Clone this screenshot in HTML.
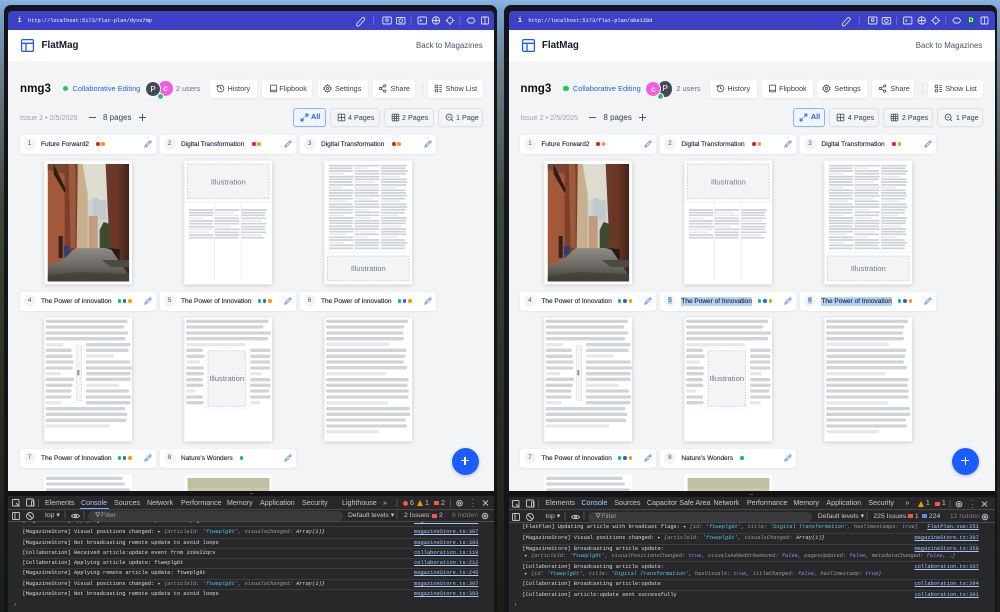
<!DOCTYPE html>
<html><head><meta charset="utf-8"><title>FlatMag</title>
<style>
html,body{margin:0;padding:0}
body{width:1000px;height:612px;overflow:hidden;position:relative;font-family:"Liberation Sans",sans-serif;background:linear-gradient(#8db5e2 0,#7aa3d2 10px,#6d7f8c 70px,#3a4a3a 200px,#2a2e22 400px,#1b1d18 612px)}
.w{position:absolute;top:0;width:500px;height:612px;filter:blur(.3px)}
.fr{position:absolute;left:3.5px;top:5px;width:493px;height:607px;background:#14141b;border-radius:7px 7px 0 0}
.tb{position:absolute;left:8.4px;top:10.5px;width:485.8px;height:19.5px;background:#3c41c7;border-radius:4px 4px 0 0}
.hd{position:absolute;left:8.4px;top:30px;width:485.8px;height:31px;background:#fff}
.ct{position:absolute;left:8.4px;top:61px;width:485.8px;height:430.2px;background:#f3f4f6;overflow:hidden}
.ci{position:absolute;left:-8.4px;top:-61px;width:500px;height:612px}
.t{position:absolute;white-space:nowrap;line-height:10px}
.b{position:absolute;background:#fff;border-radius:2.5px;height:18px;top:79.5px;box-shadow:0 .5px 1.5px rgba(0,0,0,.09);box-sizing:border-box;color:#374151;font-size:7.3px;line-height:18px;white-space:nowrap}
.b span{position:absolute;top:0}
.b svg{position:absolute;top:4.5px;width:9px;height:9px}
.v{position:absolute;top:108px;height:18.5px;background:#f3f4f6;border:.7px solid #dfe1e5;border-radius:3px;box-sizing:border-box;font-size:7.2px;color:#374151;line-height:17px;white-space:nowrap;box-shadow:0 .5px 1px rgba(0,0,0,.06)}
.v span{position:absolute;top:0}
.v svg{position:absolute;top:4px;width:9px;height:9px}
.c{position:absolute;width:136px;height:19px;background:#fff;border-radius:3px;box-shadow:0 .5px 2px rgba(0,0,0,.1)}
.c b{position:absolute;left:3.6px;top:3.5px;width:12px;height:12px;border-radius:50%;background:#f3f4f6;font-weight:400;font-size:6.5px;line-height:12px;text-align:center;color:#4b5563}
.c b u{text-decoration:none;background:#b5d3f8;padding:0 .6px}
.c span{position:absolute;left:21px;top:0;line-height:19px;font-size:6.5px;font-weight:400;-webkit-text-stroke:.14px #1f2937;color:#1f2937;white-space:nowrap}
.c span.sel{background:#b5d3f8;line-height:9px;top:5px}
.c i{position:absolute;top:7.7px;width:3.6px;height:3.6px;border-radius:50%}
.c svg{position:absolute;left:123.5px;top:5.5px;width:8px;height:8px}
.r{background:#ef1a2d}.o{background:#f59e0b}.g{background:#10b981}.u{background:#2563eb}
.th{position:absolute;width:120px;height:135px}
.sh{filter:drop-shadow(0 1.5px 2.5px rgba(0,0,0,.17))}
.dv{position:absolute;left:8.4px;top:491.2px;width:485.8px;height:121px;background:#28282a}
.dk{position:absolute;left:8.4px;top:491.2px;width:485.8px;height:4.8px;background:#131316}
.tab{position:absolute;top:498px;font-size:7.1px;line-height:10px;color:#c4c7c5;white-space:nowrap}
.l{position:absolute;font-family:"Liberation Mono",monospace;font-size:5.37px;line-height:8px;color:#dcdcdc;white-space:nowrap}
.l em{font-style:italic;color:#9a9a9a}.l .s{color:#4ec3e0;font-style:italic}.l .k{color:#9d87ee;font-style:italic}.l .w2{color:#dcdcdc;font-style:italic}
.a{position:absolute;font-family:"Liberation Mono",monospace;font-size:5.37px;line-height:8px;color:#a8c7fa;text-decoration:underline;white-space:nowrap;text-align:right;right:21.6px}
.ln{position:absolute;height:.6px;background:#3d3d40}
.ic{position:absolute;overflow:visible}
</style></head><body>

<svg width="0" height="0" style="position:absolute">
<defs>
<linearGradient id="grd" x1="0" y1="0" x2="0" y2="1"><stop offset="0" stop-color="#8d8b83"/><stop offset=".5" stop-color="#6e6c65"/><stop offset="1" stop-color="#3f3e3a"/></linearGradient>
<linearGradient id="rw" x1="0" y1="0" x2="1" y2="0"><stop offset="0" stop-color="#6b3a2a"/><stop offset=".5" stop-color="#6a3626"/><stop offset="1" stop-color="#3f2419"/></linearGradient>
<g id="hist" fill="none" stroke="#374151" stroke-width="2" stroke-linecap="round" stroke-linejoin="round"><path d="M3 12a9 9 0 1 0 3-6.7L3 8"/><path d="M3 3v5h5"/><path d="M12 7v5l4 2"/></g>
<g id="book" fill="none" stroke="#374151" stroke-width="2" stroke-linecap="round" stroke-linejoin="round"><path d="M4 19.5V5a2 2 0 0 1 2-2h14v18H6.5a2.5 2.5 0 0 1-2.500-2.500z"/><path d="M4 19a2.500 2.500 0 0 1 2.500-2.500H20"/></g>
<g id="gear" fill="none" stroke="#374151" stroke-width="2" stroke-linejoin="round"><circle cx="12" cy="12" r="3"/><path d="M12 2l2 3 3.500-.5 1 3.500L22 10l-1.500 2 1.500 2-3.500 2-1 3.500-3.500-.5-2 3-2-3-3.500.5-1-3.500L2 14l1.500-2L2 10l3.500-2 1-3.500 3.500.5z"/></g>
<g id="share" fill="none" stroke="#374151" stroke-width="2"><circle cx="18" cy="5" r="3"/><circle cx="6" cy="12" r="3"/><circle cx="18" cy="19" r="3"/><path d="M8.600 10.500l6.800-4M8.600 13.500l6.800 4"/></g>
<g id="list" fill="none" stroke="#374151" stroke-width="2"><rect x="3" y="3" width="7" height="7" rx="1"/><rect x="3" y="14" width="7" height="7" rx="1"/><path d="M14 4h7M14 9h7M14 15h7M14 20h7"/></g>
<g id="exp" fill="none" stroke="#2563eb" stroke-width="2.400" stroke-linecap="round" stroke-linejoin="round"><path d="M15 3h6v6M21 3l-7 7M9 21H3v-6M3 21l7-7"/></g>
<g id="g2" fill="none" stroke="#374151" stroke-width="2"><rect x="3" y="3" width="18" height="18" rx="2"/><path d="M12 3v18M3 12h18"/></g>
<g id="g3" fill="none" stroke="#374151" stroke-width="2"><rect x="3" y="3" width="18" height="18" rx="2"/><path d="M9 3v18M15 3v18M3 9h18M3 15h18"/></g>
<g id="zm" fill="none" stroke="#374151" stroke-width="2" stroke-linecap="round"><circle cx="11" cy="11" r="8"/><path d="M21 21l-4.300-4.300M8 11h6"/></g>
<g id="pen" fill="none" stroke="#3b76f0" stroke-width="1.800" stroke-linecap="round" stroke-linejoin="round"><path d="M17 3a2.800 2.800 0 1 1 4 4L7.500 20.500 2 22l1.500-5.500z"/><path d="M15 5l4 4M5 15l4 4"/></g>

<g id="photo">
<rect width="81.500" height="117.500" fill="#dcdcd0"/>
<path d="M40 36h20v48H40z" fill="#cfd2d2"/>
<path d="M41 52h9v32h-9z" fill="#c29a7c"/><path d="M45 34h6v18h-6zM51 36h7v20h-7z" fill="#c3c8cc"/>
<path d="M29 0h6l5 30v54H29z" fill="#c8b08e"/>
<path d="M15 0h15v8l-1 76-3 6H15z" fill="#7d3e2a"/>
<path d="M21 0h6l1 10v74h-5z" fill="#9a5a3c"/>
<path d="M0 0h17v96L0 102z" fill="#a4583a"/>
<path d="M0 0h17v10L0 6z" fill="#7a4632"/>
<path d="M6 0l12 25-1 4L6 10z" fill="#2c1d18"/>
<path d="M11 72h4v22h-4z" fill="#33231c"/>
<path d="M58 0h23.500v112L62 86z" fill="url(#rw)"/>
<path d="M52 66l4-8 6 2v24H52z" fill="#3f4a2e"/>
<path d="M16 82h6v15h-5z" fill="#2d3f70"/>
<path d="M57 84h10v14H57z" fill="#2b2d28"/>
<path d="M64 85h8v20l-8-5z" fill="#231d19"/>
<path d="M0 102l16-7 12-11 30 0 6 2 17.500 26v5.500H0z" fill="url(#grd)"/>
<path d="M54 96h27.500v7H63z" fill="#4b4a44"/>
<path d="M0 112l30-4 51.500 2v7.500H0z" fill="#3e3d38" opacity=".7"/>
</g>

<g id="p1"><rect x="43" y="17" width="263" height="371" fill="#fff"/><svg x="53" y="27" width="244.500" height="352.500" viewBox="0 0 81.500 117.500" preserveAspectRatio="none"><use href="#photo"/></svg></g>

<g id="p2"><rect x="43" y="17" width="263" height="371" fill="#fff"/>
<rect x="52" y="27" width="245" height="104" fill="#f3f4f6" stroke="#c6c9ce" stroke-width="2.500" stroke-dasharray="5 4"/>
<rect x="43" y="139" width="263" height="3" fill="#eeeff1"/>
<path d="M133.500 143V375M213.500 143V375" stroke="#eceef0" stroke-width="3"/>
<path d="M57 165h72M57 173h74M57 181h72M57 198h73M57 206h71M57 215h75M57 240h72M57 248h75M135 165h73M135 190h71M135 198h73M135 206h72M135 223h74M135 232h72M135 240h72M135 248h70M214 165h76M214 173h72M214 181h70M214 190h74M214 206h76M214 215h72M214 223h70M214 232h76M214 248h70" stroke="#cdd1d7" stroke-width="5" fill="none"/>
<path d="M57 190h44M57 232h60M57 223h72M135 173h58M135 181h72M135 215h48M214 198h62M214 240h62" stroke="#e5e7eb" stroke-width="5" fill="none"/>
<text x="175" y="88" text-anchor="middle" font-family="Liberation Sans" font-size="23" fill="#727985">Illustration</text></g>

<g id="p3"><rect x="43" y="17" width="263" height="371" fill="#fff"/>
<path d="M133.500 27V290M213.500 27V290" stroke="#f0f1f3" stroke-width="3"/>
<path d="M57 32h74M57 40h70M57 48h72M57 65h74M57 73h72M57 81h70M57 90h73M57 106h72M57 114h74M57 122h70M57 131h72M57 148h70M57 156h75M57 164h72M57 173h70M57 189h73M57 197h72M57 205h74M57 214h70M57 222h76M57 230h72M57 247h72M57 255h74M57 271h74M57 280h72
M135 32h74M135 48h72M135 56h73M135 65h74M135 73h72M135 90h71M135 106h73M135 114h70M135 122h74M135 139h70M135 148h73M135 156h74M135 172h74M135 181h72M135 197h73M135 205h74M135 214h72M135 222h74M135 238h72M135 255h72M135 263h74M135 271h70M135 280h74
M214 32h76M214 40h72M214 48h79M214 56h74M214 73h76M214 81h78M214 90h74M214 106h72M214 114h74M214 122h76M214 131h72M214 148h76M214 156h78M214 164h72M214 173h70M214 189h76M214 197h74M214 205h72M214 222h74M214 230h72M214 238h76M214 255h70M214 263h78M214 271h72M214 280h70" stroke="#cbcfd6" stroke-width="5" fill="none"/>
<path d="M57 56h44M57 98h42M57 139h58M57 181h44M57 238h52M57 263h46M135 40h42M135 81h58M135 98h74M135 131h54M135 164h42M135 189h50M135 230h60M135 247h40M214 65h56M214 98h46M214 139h58M214 181h50M214 214h60M214 247h48" stroke="#e5e7eb" stroke-width="5" fill="none"/>
<rect x="43" y="292" width="263" height="2" fill="#f1f2f4"/>
<rect x="52" y="303" width="245" height="74" fill="#f3f4f6" stroke="#c6c9ce" stroke-width="2.500" stroke-dasharray="5 4"/>
<text x="175" y="348" text-anchor="middle" font-family="Liberation Sans" font-size="23" fill="#727985">Illustration</text></g>

<g id="p4"><rect x="43" y="17" width="263" height="371" fill="#fff"/>
<path d="M52 28H288M52 45H278M52 63H290M52 80H281M52 115H120M52 133H123M52 150H126M52 168H124M52 202H128M52 220H123M52 237H120M52 255H120M172 98H297M172 115H291M172 150H297M172 168H303M172 185H297M172 202H297M172 237H292M172 255H299M172 272H297M52 290H282M52 307H287M52 325H284" stroke="#d0d3d9" stroke-width="10" stroke-linecap="round" fill="none"/>
<path d="M52 98H95M52 185H87M52 272H91M172 132H247M172 220H263M52 342H234" stroke="#e5e7eb" stroke-width="10" stroke-linecap="round" fill="none"/>
<rect x="132" y="92" width="31" height="180" rx="3" fill="#fff" stroke="#eef0f2"/>
<rect x="140" y="100" width="15" height="166" rx="3" fill="#f3f4f6" stroke="#c6c9ce" stroke-width="2" stroke-dasharray="4 3"/>
<rect x="142" y="174" width="6" height="16" fill="#8b9099"/></g>

<g id="p5"><rect x="43" y="17" width="263" height="371" fill="#fff"/>
<path d="M53 28H290M53 45H275M53 63H298M53 80H290M53 115H94M53 133H99M53 168H97M53 185H97M53 203H94M53 220H95M53 255H94M53 272H96M245 115H297M245 133H296M245 150H296M245 168H296M245 203H296M245 220H296M245 237H293M245 255H297" stroke="#d0d3d9" stroke-width="10" stroke-linecap="round" fill="none"/>
<path d="M53 98H221M53 150H86M53 237H73M245 185H271M245 272H267" stroke="#e5e7eb" stroke-width="10" stroke-linecap="round" fill="none"/>
<rect x="105" y="108" width="130" height="183" rx="3" fill="#fff" stroke="#e9ebee"/>
<rect x="114" y="116" width="112" height="167" fill="#f3f4f6" stroke="#c6c9ce" stroke-width="2.500" stroke-dasharray="5 4"/>
<text x="170" y="207" text-anchor="middle" font-family="Liberation Sans" font-size="23" fill="#727985">Illustration</text></g>

<g id="p6"><rect x="43" y="17" width="263" height="371" fill="#fff"/>
<path d="M53 28H289M53 45H278M53 63H275M53 80H277M53 115H284M53 133H281M53 150H277M53 167H287M53 203H291M53 220H288M53 237H291M53 255H291M53 290H295M53 307H296M53 324H283M53 342H286" stroke="#d0d3d9" stroke-width="10" stroke-linecap="round" fill="none"/>
<path d="M53 97H233M53 185H223M53 273H229M53 359H203" stroke="#e5e7eb" stroke-width="10" stroke-linecap="round" fill="none"/></g>

<g id="p7"><rect x="43" y="17" width="263" height="371" fill="#fff"/>
<path d="M53 28H273M53 45H280M53 63H295M53 80H280" stroke="#d0d3d9" stroke-width="10" stroke-linecap="round" fill="none"/></g>

<g id="p8"><rect x="43" y="17" width="263" height="371" fill="#fff"/><rect x="53" y="27" width="245" height="200" fill="#c9c8a6"/><rect x="53" y="27" width="245" height="30" fill="#bfc0a0"/></g>
</defs>
</svg>

<!-- ============ LEFT WINDOW ============ -->
<div class="w" style="left:0">
<div class="fr"></div>
<div class="tb"></div>
<div class="t" style="left:17.500px;top:15.500px;font:bold 7px/10px 'Liberation Mono',monospace;color:#fff">i</div>
<div class="t" style="left:28px;top:15.500px;font:5.300px/10px 'Liberation Mono',monospace;color:#fff">http://localhost:5173/flat-plan/dyvx7mp</div>
<svg class="ic" style="left:0;top:0" width="500" height="35" fill="none" stroke="#dfe1fa" stroke-width=".9">
<path d="M357 23.500l5-5.500a1.500 1.500 0 0 1 2.300 2.200l-5 5.300a1.500 1.500 0 0 1-2.300-2z"/>
<path d="M373.600 16v9" stroke="#6b6fd8"/>
<rect x="382.800" y="17" width="8.500" height="7" rx="1"/><circle cx="387" cy="20" r="1.300"/>
<rect x="396.500" y="17.500" width="8.500" height="6.500" rx="1"/><circle cx="400.700" cy="20.700" r="1.800"/>
<path d="M411 16v9" stroke="#6b6fd8"/>
<rect x="418" y="17" width="8.500" height="7" rx="1"/><path d="M420 19.500l1.500 1-1.500 1"/>
<circle cx="436" cy="20.500" r="3.700"/><path d="M432.300 20.500h7.400M436 16.800v7.400"/>
<circle cx="450" cy="20.500" r="2.800"/><path d="M450 16v2M450 23v2M445.500 20.500h2M452.500 20.500h2"/>
<path d="M460 16v9" stroke="#6b6fd8"/>
<path d="M467 20.500l2-2.500h4l2 2.500-2 2.500h-4z"/>
<rect x="481.500" y="17" width="7" height="7" rx="1"/><path d="M485 17v7"/>
</svg>
<div class="hd"></div>
<svg class="ic" style="left:21px;top:39px" width="13" height="13" viewBox="0 0 13 13" fill="none" stroke="#1a5cf5" stroke-width="1.300"><rect x=".6" y=".6" width="11.800" height="11.800" rx="1.200"/><path d="M.6 4.300h11.800M5 4.300v8"/></svg>
<div class="t" style="left:41.500px;top:41px;font-size:9.800px;font-weight:700;color:#111827">FlatMag</div>
<div class="t" style="left:416px;top:41px;font-size:7.900px;color:#4b5563">Back to Magazines</div>
<div class="ct"><div class="ci">
<div class="t" style="left:20px;top:84px;font-size:11.600px;font-weight:700;color:#111">nmg3</div>
<div style="position:absolute;left:62.700px;top:85.700px;width:5.600px;height:5.600px;border-radius:50%;background:#22c55e"></div>
<div class="t" style="left:72.500px;top:84px;font-size:7.400px;color:#2563eb">Collaborative Editing</div>
<div style="position:absolute;left:158px;top:81px;width:15px;height:15px;border-radius:50%;background:#f45ce8;color:#fff;font-size:8px;line-height:15px;text-align:center;font-weight:700">c</div>
<div style="position:absolute;left:145px;top:80.500px;width:16px;height:16px;border-radius:50%;background:#444b57;border:.7px solid #fff;box-sizing:border-box;color:#fff;font-size:8px;line-height:15px;text-align:center">P</div>
<div style="position:absolute;left:157.500px;top:93.500px;width:5px;height:5px;border-radius:50%;background:#22c55e;outline:.6px solid #fff"></div>
<div class="t" style="left:176px;top:84px;font-size:7.400px;color:#6b7280">2 users</div>

<div class="b" style="left:210px;width:47px"><svg viewBox="0 0 24 24" style="left:6px"><use href="#hist"/></svg><span style="left:17.500px">History</span></div>
<div class="b" style="left:262px;width:50px"><svg viewBox="0 0 24 24" style="left:6.500px"><use href="#book"/></svg><span style="left:17.300px">Flipbook</span></div>
<div class="b" style="left:317.500px;width:50.500px"><svg viewBox="0 0 24 24" style="left:5.500px"><use href="#gear"/></svg><span style="left:17.500px">Settings</span></div>
<div class="b" style="left:372.500px;width:42px"><svg viewBox="0 0 24 24" style="left:5.500px"><use href="#share"/></svg><span style="left:18px">Share</span></div>
<div style="position:absolute;left:422.300px;top:83px;width:1px;height:11px;background:#dfe1e5"></div>
<div class="b" style="left:428px;width:54.500px"><svg viewBox="0 0 24 24" style="left:6px"><use href="#list"/></svg><span style="left:17.500px">Show List</span></div>

<div class="t" style="left:20px;top:112.500px;font-size:7.200px;color:#9ca3af">Issue 2 • 2/5/2025</div>
<div style="position:absolute;left:89px;top:117px;width:7px;height:.9px;background:#4b5563"></div>
<div class="t" style="left:103px;top:112.500px;font-size:8px;color:#374151">8 pages</div>
<div style="position:absolute;left:139px;top:117px;width:7px;height:.9px;background:#4b5563"></div>
<div style="position:absolute;left:142.100px;top:114px;width:.9px;height:7px;background:#4b5563"></div>

<div class="v" style="left:293px;width:32.500px;background:#eff4fe;border:1px solid #8fb2f7;color:#2563eb;font-weight:700;line-height:16.500px"><svg viewBox="0 0 24 24" style="left:5.500px;top:3.800px"><use href="#exp"/></svg><span style="left:17px">All</span></div>
<div class="v" style="left:329.500px;width:50px"><svg viewBox="0 0 24 24" style="left:6px"><use href="#g2"/></svg><span style="left:17.500px">4 Pages</span></div>
<div class="v" style="left:383.500px;width:50px"><svg viewBox="0 0 24 24" style="left:6px"><use href="#g3"/></svg><span style="left:17.500px">2 Pages</span></div>
<div class="v" style="left:437.500px;width:45px"><svg viewBox="0 0 24 24" style="left:6px"><use href="#zm"/></svg><span style="left:17.500px">1 Page</span></div>

<div class="c" style="left:20px;top:134.500px"><b>1</b><span>Future Forward2</span><i class="r" style="left:76px"></i><i class="o" style="left:81.300px"></i><svg viewBox="0 0 24 24"><use href="#pen"/></svg></div>
<div class="c" style="left:160px;top:134.500px"><b>2</b><span>Digital Transformation</span><i class="r" style="left:92px"></i><i class="o" style="left:97.300px"></i><svg viewBox="0 0 24 24"><use href="#pen"/></svg></div>
<div class="c" style="left:300px;top:134.500px"><b>3</b><span>Digital Transformation</span><i class="r" style="left:92px"></i><i class="o" style="left:97.300px"></i><svg viewBox="0 0 24 24"><use href="#pen"/></svg></div>
<div class="c" style="left:20px;top:291.700px"><b>4</b><span>The Power of Innovation</span><i class="g" style="left:97.500px"></i><i class="u" style="left:102.900px"></i><i class="o" style="left:108.200px"></i><svg viewBox="0 0 24 24"><use href="#pen"/></svg></div>
<div class="c" style="left:160px;top:291.700px"><b>5</b><span>The Power of Innovation</span><i class="g" style="left:97.500px"></i><i class="u" style="left:102.900px"></i><i class="o" style="left:108.200px"></i><svg viewBox="0 0 24 24"><use href="#pen"/></svg></div>
<div class="c" style="left:300px;top:291.700px"><b>6</b><span>The Power of Innovation</span><i class="g" style="left:97.500px"></i><i class="u" style="left:102.900px"></i><i class="o" style="left:108.200px"></i><svg viewBox="0 0 24 24"><use href="#pen"/></svg></div>
<div class="c" style="left:20px;top:448.700px"><b>7</b><span>The Power of Innovation</span><i class="g" style="left:97.500px"></i><i class="u" style="left:102.900px"></i><i class="o" style="left:108.200px"></i><svg viewBox="0 0 24 24"><use href="#pen"/></svg></div>
<div class="c" style="left:160px;top:448.700px"><b>8</b><span>Nature's Wonders</span><i class="g" style="left:79.900px"></i><svg viewBox="0 0 24 24"><use href="#pen"/></svg></div>

<svg class="th sh" style="left:30px;top:155px" viewBox="0 0 360 405"><use href="#p1"/></svg>
<svg class="th sh" style="left:170px;top:155px" viewBox="0 0 360 405"><use href="#p2"/></svg>
<svg class="th sh" style="left:310px;top:155px" viewBox="0 0 360 405"><use href="#p3"/></svg>
<svg class="th sh" style="left:30px;top:312px" viewBox="0 0 360 405"><use href="#p4"/></svg>
<svg class="th sh" style="left:170px;top:312px" viewBox="0 0 360 405"><use href="#p5"/></svg>
<svg class="th sh" style="left:310px;top:312px" viewBox="0 0 360 405"><use href="#p6"/></svg>
<svg class="th" style="left:30px;top:469px" viewBox="0 0 360 405"><use href="#p7"/></svg>
<svg class="th" style="left:170px;top:469px" viewBox="0 0 360 405"><use href="#p8"/></svg>

<div style="position:absolute;left:451.500px;top:447.500px;width:27px;height:27px;border-radius:50%;background:#1a5cff;box-shadow:0 1px 3px rgba(0,0,0,.25),0 0 0 .6px #fff"></div>
<div style="position:absolute;left:461px;top:460.300px;width:8px;height:1.200px;background:#fff"></div>
<div style="position:absolute;left:464.400px;top:457px;width:1.200px;height:8px;background:#fff"></div>
</div></div>
<div class="dk"></div>
<div class="dv" style="top:496px;height:116px"></div>
<div style="position:absolute;left:250px;top:493px;width:3px;height:1px;background:#5a5a5e"></div>
<svg class="ic" style="left:0;top:495px" width="500" height="30" fill="none" stroke="#c4c7c5" stroke-width=".9">
<rect x="12.500" y="4.500" width="6.500" height="6.500" rx=".8"/><path d="M16 8l3.500 3.500"/>
<rect x="26.500" y="4" width="7" height="7" rx=".8"/><rect x="31.500" y="6" width="2.500" height="5"/>
<path d="M38.500 4v8" stroke="#555"/>
<path d="M117.500 16v8M65 16v8M84 16v8" stroke="#555"/>
<rect x="12.500" y="17.500" width="7" height="7" rx=".8"/><path d="M15 17.500v7"/>
<circle cx="30" cy="21" r="3.500"/><path d="M27.500 18.500l5 5"/>
<path d="M71.500 21c1.500-2.300 6.500-2.300 8 0-1.500 2.300-6.500 2.300-8 0z"/><circle cx="75.500" cy="21" r="1"/>
<path d="M450.500 4v8M397 4v8M397 16v8" stroke="#555"/>
<circle cx="459.500" cy="8.200" r="2.800"/><circle cx="459.500" cy="8.200" r="1"/>
<path d="M473 4.500v.5M473 8v.5M473 11.500v.5" stroke-width="1.100"/>
<path d="M483 5.500l5 5M488 5.500l-5 5"/>
<circle cx="485" cy="21" r="2.800"/><circle cx="485" cy="21" r="1"/>
</svg>
<div class="tab" style="left:45px">Elements</div>
<div class="tab" style="left:81px;color:#a8c7fa">Console</div>
<div style="position:absolute;left:80px;top:508px;width:28.500px;height:1px;background:#7cacf8"></div>
<div class="tab" style="left:114px">Sources</div>
<div class="tab" style="left:147px">Network</div>
<div class="tab" style="left:181px">Performance</div>
<div class="tab" style="left:227px">Memory</div>
<div class="tab" style="left:260px">Application</div>
<div class="tab" style="left:302px">Security</div>
<div class="tab" style="left:342px">Lighthouse</div>
<div class="tab" style="left:383px">»</div>
<div style="position:absolute;left:402.500px;top:500.500px;width:5.500px;height:5.500px;border-radius:50%;background:#f2564d"></div>
<div class="tab" style="left:410px">6</div>
<svg class="ic" style="left:417px;top:500px" width="6" height="6"><path d="M3 0l3 6H0z" fill="#f29900"/></svg>
<div class="tab" style="left:425px">1</div>
<div style="position:absolute;left:433.500px;top:501px;width:5px;height:4px;background:#f2564d"></div>
<div class="tab" style="left:441px">2</div>

<div style="position:absolute;left:8.400px;top:508.700px;width:485.800px;height:.6px;background:#4a4a4d"></div>
<div class="t" style="left:45px;top:511px;font-size:6.800px;color:#c4c7c5">top ▾</div>
<div style="position:absolute;left:88px;top:511px;width:255px;height:10px;background:#3b3b3e;border-radius:5px"></div>
<div class="t" style="left:95px;top:511px;font-size:6.500px;color:#c4c7c5">⛛</div>
<div class="t" style="left:101px;top:511px;font-size:6.800px;color:#9a9a9a">Filter</div>
<div class="t" style="left:348px;top:511px;font-size:6.800px;color:#c4c7c5">Default levels ▾</div>
<div class="t" style="left:404px;top:511px;font-size:6.800px;color:#c4c7c5">2 Issues:</div>
<div style="position:absolute;left:432px;top:513.500px;width:5px;height:4px;background:#f2564d"></div>
<div class="t" style="left:439px;top:511px;font-size:6.800px;color:#c4c7c5">2</div>
<div class="t" style="left:452px;top:511px;font-size:6.800px;color:#77777a">8 hidden</div>
<div style="position:absolute;left:8.400px;top:521px;width:485.800px;height:.6px;background:#4a4a4d"></div>

<div style="position:absolute;left:8.400px;top:521.600px;width:485.800px;height:3.400px;overflow:hidden">
<div class="l" style="left:14.100px;top:-4.500px">[MagazineStore] Applying remote article update: ftweplg8t</div>
<div class="a" style="top:-4.500px;right:15.800px">magazineStore.ts:245</div>
</div>
<div class="ln" style="left:22px;top:525.800px;width:456px"></div>
<div class="l" style="left:22.500px;top:528px">[MagazineStore] Visual positions changed:  ▸ <em>{articleId: </em><span class="s">'ftweplg8t'</span><em>, visualsChanged: </em><span class="w2">Array(1)}</span></div>
<div class="a" style="top:527.700px">magazineStore.ts:307</div>
<div class="ln" style="left:22px;top:537.500px;width:456px"></div>
<div class="l" style="left:22.500px;top:538.500px">[MagazineStore] Not broadcasting remote update to avoid loops</div>
<div class="a" style="top:538.500px">magazineStore.ts:393</div>
<div class="ln" style="left:22px;top:547.700px;width:456px"></div>
<div class="l" style="left:22.500px;top:548.700px">[Collaboration] Received article:update event from 2z8s22qcv</div>
<div class="a" style="top:548.700px">collaboration.ts:119</div>
<div class="ln" style="left:22px;top:557.800px;width:456px"></div>
<div class="l" style="left:22.500px;top:558.800px">[Collaboration] Applying article update: ftweplg8t</div>
<div class="a" style="top:558.800px">collaboration.ts:212</div>
<div class="ln" style="left:22px;top:568px;width:456px"></div>
<div class="l" style="left:22.500px;top:569px">[MagazineStore] Applying remote article update: ftweplg8t</div>
<div class="a" style="top:569px">magazineStore.ts:245</div>
<div class="ln" style="left:22px;top:578.500px;width:456px"></div>
<div class="l" style="left:22.500px;top:579.700px">[MagazineStore] Visual positions changed:  ▸ <em>{articleId: </em><span class="s">'ftweplg8t'</span><em>, visualsChanged: </em><span class="w2">Array(1)}</span></div>
<div class="a" style="top:579.700px">magazineStore.ts:307</div>
<div class="ln" style="left:22px;top:589.300px;width:456px"></div>
<div class="l" style="left:22.500px;top:590.300px">[MagazineStore] Not broadcasting remote update to avoid loops</div>
<div class="a" style="top:590.300px">magazineStore.ts:393</div>
<div class="l" style="left:13.500px;top:601px;color:#7cacf8;font-weight:700">›</div>
</div>

<!-- ============ RIGHT WINDOW ============ -->
<div class="w" style="left:500.400px">
<div class="fr"></div>
<div class="tb"></div>
<div class="t" style="left:17.500px;top:15.500px;font:bold 7px/10px 'Liberation Mono',monospace;color:#fff">i</div>
<div class="t" style="left:28px;top:15.500px;font:5.300px/10px 'Liberation Mono',monospace;color:#fff">http://localhost:5173/flat-plan/abe128d</div>
<svg class="ic" style="left:0;top:0" width="500" height="35" fill="none" stroke="#dfe1fa" stroke-width=".9">
<path d="M342.500 23.500l5-5.500a1.500 1.500 0 0 1 2.300 2.200l-5 5.300a1.500 1.500 0 0 1-2.300-2z"/>
<path d="M359.200 16v9" stroke="#6b6fd8"/>
<rect x="368.400" y="17" width="8.500" height="7" rx="1"/><circle cx="372.600" cy="20" r="1.300"/>
<rect x="382.200" y="17.500" width="8.500" height="6.500" rx="1"/><circle cx="386.400" cy="20.700" r="1.800"/>
<path d="M396.600 16v9" stroke="#6b6fd8"/>
<rect x="403.400" y="17" width="8.500" height="7" rx="1"/><path d="M405.400 19.500l1.500 1-1.500 1"/>
<circle cx="421.700" cy="20.500" r="3.700"/><path d="M418 20.500h7.400M421.700 16.800v7.400"/>
<circle cx="435.700" cy="20.500" r="2.800"/><path d="M435.700 16v2M435.700 23v2M431.200 20.500h2M438.200 20.500h2"/>
<path d="M445.800 16v9" stroke="#6b6fd8"/>
<path d="M452.700 20.500l2-2.500h4l2 2.500-2 2.500h-4z"/>
<rect x="481" y="17" width="7" height="7" rx="1"/><path d="M484.500 17v7"/>
</svg>
<div style="position:absolute;left:467px;top:16.500px;width:7.500px;height:7.500px;background:#0e6b5c;border-radius:1px;color:#fff;font-size:6.500px;font-weight:700;line-height:7.500px;text-align:center">D</div>
<div class="hd"></div>
<svg class="ic" style="left:21.300px;top:39px" width="13" height="13" viewBox="0 0 13 13" fill="none" stroke="#1a5cf5" stroke-width="1.300"><rect x=".6" y=".6" width="11.800" height="11.800" rx="1.200"/><path d="M.6 4.300h11.800M5 4.300v8"/></svg>
<div class="t" style="left:41.500px;top:41px;font-size:9.800px;font-weight:700;color:#111827">FlatMag</div>
<div class="t" style="left:415.300px;top:41px;font-size:7.900px;color:#4b5563">Back to Magazines</div>
<div class="ct"><div class="ci">
<div class="t" style="left:20px;top:84px;font-size:11.600px;font-weight:700;color:#111">nmg3</div>
<div style="position:absolute;left:62.700px;top:85.700px;width:5.600px;height:5.600px;border-radius:50%;background:#22c55e;box-shadow:0 0 0 1.500px #dcf5e5"></div>
<div class="t" style="left:72.500px;top:84px;font-size:7.400px;color:#2563eb">Collaborative Editing</div>
<div style="position:absolute;left:157.500px;top:80.500px;width:14.500px;height:16px;border-radius:50%;background:#444b57;color:#fff;font-size:8px;line-height:15px;text-align:center">P</div>
<div style="position:absolute;left:145px;top:80.500px;width:16px;height:16px;border-radius:50%;background:#f45ce8;border:.7px solid #fff;box-sizing:border-box;color:#fff;font-size:8px;line-height:15px;text-align:center;font-weight:700">c</div>
<div style="position:absolute;left:157.500px;top:93.500px;width:5px;height:5px;border-radius:50%;background:#22c55e;outline:.6px solid #fff"></div>
<div class="t" style="left:176px;top:84px;font-size:7.400px;color:#6b7280">2 users</div>

<div class="b" style="left:209.500px;width:47px"><svg viewBox="0 0 24 24" style="left:6px"><use href="#hist"/></svg><span style="left:17.500px">History</span></div>
<div class="b" style="left:261.200px;width:51px"><svg viewBox="0 0 24 24" style="left:6.500px"><use href="#book"/></svg><span style="left:17.500px">Flipbook</span></div>
<div class="b" style="left:316.500px;width:50.500px"><svg viewBox="0 0 24 24" style="left:5.500px"><use href="#gear"/></svg><span style="left:17.500px">Settings</span></div>
<div class="b" style="left:372px;width:42px"><svg viewBox="0 0 24 24" style="left:5.500px"><use href="#share"/></svg><span style="left:18px">Share</span></div>
<div style="position:absolute;left:421.800px;top:83px;width:1px;height:11px;background:#dfe1e5"></div>
<div class="b" style="left:427.300px;width:55px"><svg viewBox="0 0 24 24" style="left:6px"><use href="#list"/></svg><span style="left:17.500px">Show List</span></div>

<div class="t" style="left:20px;top:112.500px;font-size:7.200px;color:#9ca3af">Issue 2 • 2/5/2025</div>
<div style="position:absolute;left:89px;top:117px;width:7px;height:.9px;background:#4b5563"></div>
<div class="t" style="left:103px;top:112.500px;font-size:8px;color:#374151">8 pages</div>
<div style="position:absolute;left:139px;top:117px;width:7px;height:.9px;background:#4b5563"></div>
<div style="position:absolute;left:142.100px;top:114px;width:.9px;height:7px;background:#4b5563"></div>

<div class="v" style="left:292.500px;width:32.500px;background:#eff4fe;border:1px solid #8fb2f7;color:#2563eb;font-weight:700;line-height:16.500px"><svg viewBox="0 0 24 24" style="left:5.500px;top:3.800px"><use href="#exp"/></svg><span style="left:17px">All</span></div>
<div class="v" style="left:329px;width:50px"><svg viewBox="0 0 24 24" style="left:6px"><use href="#g2"/></svg><span style="left:17.500px">4 Pages</span></div>
<div class="v" style="left:383px;width:50px"><svg viewBox="0 0 24 24" style="left:6px"><use href="#g3"/></svg><span style="left:17.500px">2 Pages</span></div>
<div class="v" style="left:437px;width:45.300px"><svg viewBox="0 0 24 24" style="left:6px"><use href="#zm"/></svg><span style="left:17.500px">1 Page</span></div>

<div class="c" style="left:20px;top:134.500px"><b>1</b><span>Future Forward2</span><i class="r" style="left:76px"></i><i class="o" style="left:81.300px"></i><svg viewBox="0 0 24 24"><use href="#pen"/></svg></div>
<div class="c" style="left:160px;top:134.500px"><b>2</b><span>Digital Transformation</span><i class="r" style="left:92px"></i><i class="o" style="left:97.300px"></i><svg viewBox="0 0 24 24"><use href="#pen"/></svg></div>
<div class="c" style="left:300px;top:134.500px"><b>3</b><span>Digital Transformation</span><i class="r" style="left:92px"></i><i class="o" style="left:97.300px"></i><svg viewBox="0 0 24 24"><use href="#pen"/></svg></div>
<div class="c" style="left:20px;top:291.700px"><b>4</b><span>The Power of Innovation</span><i class="g" style="left:97.500px"></i><i class="u" style="left:102.900px"></i><i class="o" style="left:108.200px"></i><svg viewBox="0 0 24 24"><use href="#pen"/></svg></div>
<div class="c" style="left:160px;top:291.700px"><b><u>5</u></b><span class="sel">The Power of Innovation</span><i class="g" style="left:97.500px"></i><i class="u" style="left:102.900px"></i><i class="o" style="left:108.200px"></i><svg viewBox="0 0 24 24"><use href="#pen"/></svg></div>
<div class="c" style="left:300px;top:291.700px"><b><u>6</u></b><span class="sel">The Power of Innovation</span><i class="g" style="left:97.500px"></i><i class="u" style="left:102.900px"></i><i class="o" style="left:108.200px"></i><svg viewBox="0 0 24 24"><use href="#pen"/></svg></div>
<div class="c" style="left:20px;top:448.700px"><b>7</b><span>The Power of Innovation</span><i class="g" style="left:97.500px"></i><i class="u" style="left:102.900px"></i><i class="o" style="left:108.200px"></i><svg viewBox="0 0 24 24"><use href="#pen"/></svg></div>
<div class="c" style="left:160px;top:448.700px"><b>8</b><span>Nature's Wonders</span><i class="g" style="left:79.900px"></i><svg viewBox="0 0 24 24"><use href="#pen"/></svg></div>

<svg class="th sh" style="left:30px;top:155px" viewBox="0 0 360 405"><use href="#p1"/></svg>
<svg class="th sh" style="left:170px;top:155px" viewBox="0 0 360 405"><use href="#p2"/></svg>
<svg class="th sh" style="left:310px;top:155px" viewBox="0 0 360 405"><use href="#p3"/></svg>
<svg class="th sh" style="left:30px;top:312px" viewBox="0 0 360 405"><use href="#p4"/></svg>
<svg class="th sh" style="left:170px;top:312px" viewBox="0 0 360 405"><use href="#p5"/></svg>
<svg class="th sh" style="left:310px;top:312px" viewBox="0 0 360 405"><use href="#p6"/></svg>
<svg class="th" style="left:30px;top:469px" viewBox="0 0 360 405"><use href="#p7"/></svg>
<svg class="th" style="left:170px;top:469px" viewBox="0 0 360 405"><use href="#p8"/></svg>

<div style="position:absolute;left:451.500px;top:447.500px;width:27px;height:27px;border-radius:50%;background:#1a5cff;box-shadow:0 1px 3px rgba(0,0,0,.25),0 0 0 .6px #fff"></div>
<div style="position:absolute;left:461px;top:460.300px;width:8px;height:1.200px;background:#fff"></div>
<div style="position:absolute;left:464.400px;top:457px;width:1.200px;height:8px;background:#fff"></div>
</div></div>
<div class="dk" style="top:491.700px"></div>
<div class="dv" style="top:496.500px;height:115.500px"></div>
<div style="position:absolute;left:250px;top:493.500px;width:3px;height:1px;background:#5a5a5e"></div>
<svg class="ic" style="left:0;top:495.500px" width="500" height="30" fill="none" stroke="#c4c7c5" stroke-width=".9">
<rect x="12.500" y="4.500" width="6.500" height="6.500" rx=".8"/><path d="M16 8l3.500 3.500"/>
<rect x="26.500" y="4" width="7" height="7" rx=".8"/><rect x="31.500" y="6" width="2.500" height="5"/>
<path d="M38.500 4v8" stroke="#555"/>
<path d="M65 16v8M84 16v8M117.500 16v8" stroke="#555"/>
<rect x="12.500" y="17.500" width="7" height="7" rx=".8"/><path d="M15 17.500v7"/>
<circle cx="30" cy="21" r="3.500"/><path d="M27.500 18.500l5 5"/>
<path d="M71.500 21c1.500-2.300 6.500-2.300 8 0-1.500 2.300-6.500 2.300-8 0z"/><circle cx="75.500" cy="21" r="1"/>
<path d="M450 4v8M367 16v8" stroke="#555"/>
<circle cx="459" cy="8.200" r="2.800"/><circle cx="459" cy="8.200" r="1"/>
<path d="M472.500 4.500v.5M472.500 8v.5M472.500 11.500v.5" stroke-width="1.100"/>
<path d="M482 5.500l5 5M487 5.500l-5 5"/>
<circle cx="485" cy="21" r="2.800"/><circle cx="485" cy="21" r="1"/>
</svg>
<div class="tab" style="left:45px">Elements</div>
<div class="tab" style="left:81px;color:#a8c7fa">Console</div>
<div style="position:absolute;left:80px;top:508.500px;width:28.500px;height:1px;background:#7cacf8"></div>
<div class="tab" style="left:114px">Sources</div>
<div class="tab" style="left:146.500px">Capacitor Safe Area</div>
<div class="tab" style="left:213px">Network</div>
<div class="tab" style="left:246.500px">Performance</div>
<div class="tab" style="left:293px">Memory</div>
<div class="tab" style="left:326px">Application</div>
<div class="tab" style="left:368px">Security</div>
<div class="tab" style="left:405px">»</div>
<svg class="ic" style="left:418px;top:500.500px" width="6" height="6"><path d="M3 0l3 6H0z" fill="#f29900"/></svg>
<div class="tab" style="left:425.500px">1</div>
<div style="position:absolute;left:434.500px;top:501.500px;width:5px;height:4px;background:#f2564d"></div>
<div class="tab" style="left:441.500px">1</div>

<div style="position:absolute;left:8.400px;top:509.200px;width:485.800px;height:.6px;background:#4a4a4d"></div>
<div class="t" style="left:45px;top:511.500px;font-size:6.800px;color:#c4c7c5">top ▾</div>
<div style="position:absolute;left:88px;top:511.500px;width:224px;height:10px;background:#3b3b3e;border-radius:5px"></div>
<div class="t" style="left:95px;top:511.500px;font-size:6.500px;color:#c4c7c5">⛛</div>
<div class="t" style="left:101px;top:511.500px;font-size:6.800px;color:#9a9a9a">Filter</div>
<div class="t" style="left:317.500px;top:511.500px;font-size:6.800px;color:#c4c7c5">Default levels ▾</div>
<div class="t" style="left:373px;top:511.500px;font-size:6.800px;color:#c4c7c5">225 Issues:</div>
<div style="position:absolute;left:408px;top:514px;width:5px;height:4px;background:#f2564d"></div>
<div class="t" style="left:414.500px;top:511.500px;font-size:6.800px;color:#c4c7c5">1</div>
<div style="position:absolute;left:422px;top:514px;width:5px;height:4px;background:#5b8df0"></div>
<div class="t" style="left:428.500px;top:511.500px;font-size:6.800px;color:#c4c7c5">224</div>
<div class="t" style="left:449.500px;top:511.500px;font-size:6.800px;color:#77777a">12 hidden</div>
<div style="position:absolute;left:8.400px;top:521.500px;width:485.800px;height:.6px;background:#4a4a4d"></div>

<div class="l" style="left:22px;top:523px">[FlatPlan] Updating article with broadcast flags:  ▸ <em>{id: </em><span class="s">'ftweplg8t'</span><em>, title: </em><span class="s">'Digital Transformation'</span><em>, hasTimestamps: </em><span class="k">true</span><em>}</em></div>
<div class="a" style="top:522.700px">FlatPlan.vue:251</div>
<div class="ln" style="left:22px;top:532.500px;width:456px"></div>
<div class="l" style="left:22px;top:534.300px">[MagazineStore] Visual positions changed:  ▸ <em>{articleId: </em><span class="s">'ftweplg8t'</span><em>, visualsChanged: </em><span class="w2">Array(1)}</span></div>
<div class="a" style="top:534px">magazineStore.ts:307</div>
<div class="ln" style="left:22px;top:543.500px;width:456px"></div>
<div class="l" style="left:22px;top:545px">[MagazineStore] Broadcasting article update:</div>
<div class="a" style="top:545px">magazineStore.ts:358</div>
<div class="l" style="left:24px;top:552px">▸ <em>{articleId: </em><span class="s">'ftweplg8t'</span><em>, visualPositionsChanged: </em><span class="k">true</span><em>, visualsAddedOrRemoved: </em><span class="k">false</span><em>, pagesUpdated: </em><span class="k">false</span><em>, metadataChanged: </em><span class="k">false</span><em>, …}</em></div>
<div class="ln" style="left:22px;top:561px;width:456px"></div>
<div class="l" style="left:22px;top:562.700px">[Collaboration] Broadcasting article update:</div>
<div class="a" style="top:562.700px">collaboration.ts:337</div>
<div class="l" style="left:24px;top:569.700px">▸ <em>{id: </em><span class="s">'ftweplg8t'</span><em>, title: </em><span class="s">'Digital Transformation'</span><em>, hasVisuals: </em><span class="k">true</span><em>, titleChanged: </em><span class="k">false</span><em>, hasTimestamp: </em><span class="k">true</span><em>}</em></div>
<div class="ln" style="left:22px;top:579px;width:456px"></div>
<div class="l" style="left:22px;top:580.300px">[Collaboration] Broadcasting article:update</div>
<div class="a" style="top:580.300px">collaboration.ts:294</div>
<div class="ln" style="left:22px;top:589.500px;width:456px"></div>
<div class="l" style="left:22px;top:590.700px">[Collaboration] article:update sent successfully</div>
<div class="a" style="top:590.700px">collaboration.ts:301</div>
<div class="l" style="left:13.500px;top:601px;color:#7cacf8;font-weight:700">›</div>
</div>
</body></html>
